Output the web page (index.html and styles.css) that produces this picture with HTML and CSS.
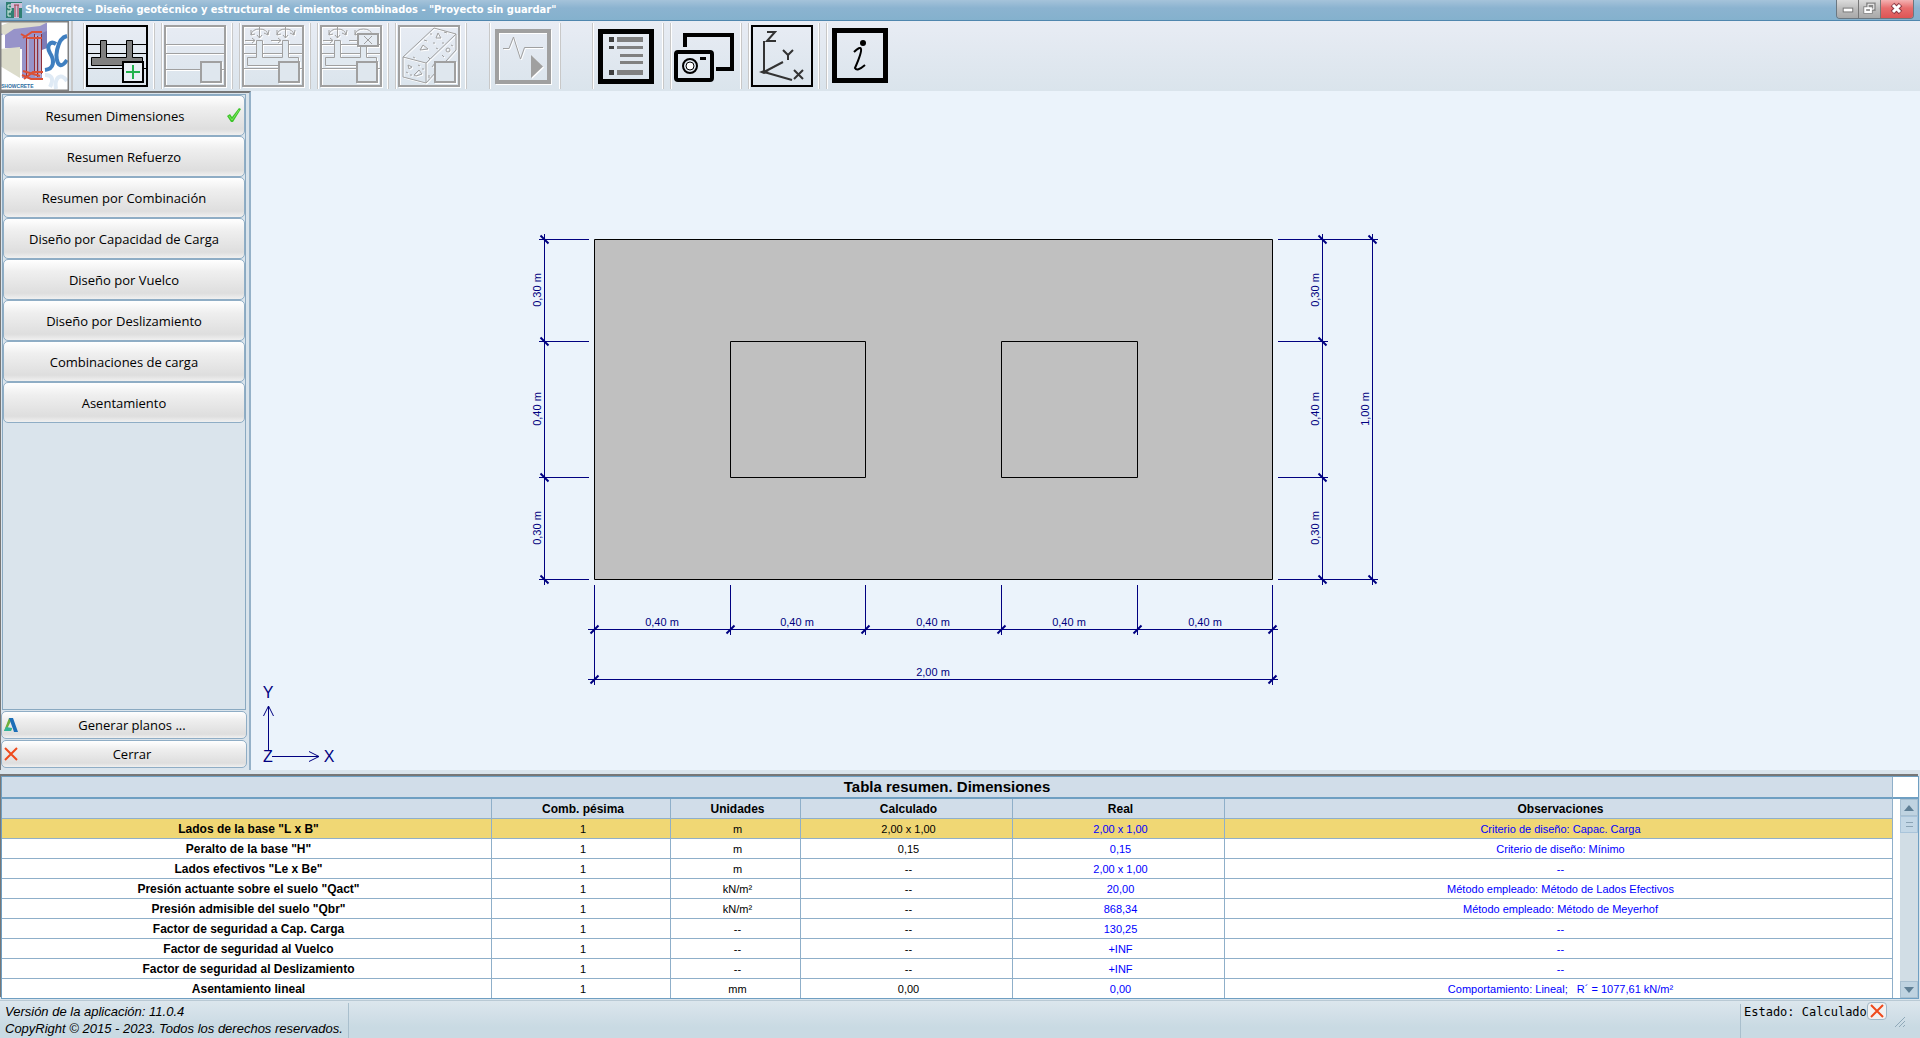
FILE: index.html
```html
<!DOCTYPE html>
<html lang="es">
<head>
<meta charset="utf-8">
<title>Showcrete</title>
<link rel="stylesheet" href="styles.css">
</head>
<body>
<header class="titlebar">
  <svg class="app-icon" viewBox="0 0 16 16" aria-hidden="true">
    <rect width="16" height="16" fill="#2f7f73"/>
    <path d="M5 1h11v5h-3v10H8V6H5z" fill="#cdbfd8"/>
    <path d="M9 3v12M12 3v12M8 3h5" stroke="#a33a4a" fill="none"/>
    <path d="M5 3H2v3h3v3H1M5 10H2v4h3" stroke="#d8efe6" fill="none"/>
  </svg>
  <h1 class="title">Showcrete - Diseño geotécnico y estructural de cimientos combinados - "Proyecto sin guardar"</h1>
  <div class="window-buttons">
    <button class="win" aria-label="Minimizar"><svg viewBox="0 0 22 18"><rect x="6.500" y="8.500" width="10" height="4" fill="#fff" stroke="#777"/></svg></button>
    <button class="win" aria-label="Restaurar"><svg viewBox="0 0 22 18"><g fill="none"><path d="M9.500 4.500h6v5h-6zM6.500 8.500h6v4h-6z" stroke="#888" stroke-width="4"/><path d="M9.500 4.500h6v5h-6z" stroke="#fff"/><path d="M6.500 8.500h6v4h-6z" fill="#999" stroke="#fff" stroke-width="2"/></g></svg></button>
    <button class="win win-close" aria-label="Cerrar ventana"><svg viewBox="0 0 32 18"><path d="M11.500 4.500l8 8M19.500 4.500l-8 8" stroke="#8c3a44" stroke-width="5"/><path d="M12 5l7 7M19 5l-7 7" stroke="#fff" stroke-width="3"/></svg></button>
  </div>
</header>

<nav class="toolbar" aria-label="Herramientas">
  <svg class="logo" viewBox="0 0 69 70" role="img" aria-label="Showcrete">
    <rect width="69" height="70" fill="#fff"/>
    <path d="M0 5L12 2H47V27L42 28V58L22 57V28L5 27V12L0 15z" fill="#9793c9"/>
    <path d="M0 5L10 1H48L40 5L14 8L5 14L0 12z" fill="#dddccd"/>
    <path d="M0 28L20 26V57L0 45z" fill="#dcdccb"/>
    <path d="M42 12L47 10V27L42 29z" fill="#7f7cb6"/>
    <path d="M26.500 15V56M34.500 13V52M41.500 13V53" stroke="#8f2f3a" fill="none"/>
    <path d="M28 15V56M36 14V56M40 15V56" stroke="#e8c6c8" fill="none"/>
    <path d="M37.500 15V56" stroke="#8f2f3a" fill="none"/>
    <path d="M21 13L28 17H42M23 17L32 11H42M22 54L31 58H43M24 58L33 51H43M23 50L40 55" stroke="#dc5035" stroke-width="2" fill="none"/>
    <g fill="none" stroke="#3f7fc0" stroke-width="4"><path d="M56 23C50 19 46 25 50 32C55 40 54 48 45 49"/><path d="M67 15C57 17 53 40 60 44Q63 45 67 39"/></g>
    <g fill="none" stroke="#dfeaf5" stroke-width="4"><path d="M45 54Q56 54 50 66"/><path d="M67 60C60 50 54 58 56 68"/></g>
    <text x="1" y="67" class="logo-text">SHOWCRETE</text>
    <rect x="0" y="0" width="69" height="70" fill="none" stroke="#808080" stroke-width="3"/>
  </svg>

  <div class="tools tools-model">
    <button class="tool" aria-label="Nuevo cimiento"><svg viewBox="0 0 62 62">
      <path d="M0 19.500H62M0 28.500H62M0 43.500H62" stroke="#000"/>
      <path d="M5.500 32.500H14.500V15.500H20.500V32.500H40.500V15.500H46.500V32.500H56.500V40.500H5.500z" fill="#808080" stroke="#000"/>
      <rect x="37" y="37" width="20" height="20" fill="#e9eff5" stroke="#000" stroke-width="2"/>
      <path d="M47 40V54M40 47H54" stroke="#22b14c" stroke-width="2"/>
      <rect x="1" y="1" width="60" height="60" fill="none" stroke="#000" stroke-width="2"/></svg></button>
    <button class="tool" disabled aria-label="Estratos"><svg viewBox="0 0 62 62">
      <path d="M0 19.500H62M0 28.500H62M0 44.500H62" stroke="#a0a0a0"/>
      <rect x="37" y="37" width="20" height="20" fill="#dfe7ee" stroke="#a0a0a0" stroke-width="2"/>
      <rect x="1" y="1" width="60" height="60" fill="none" stroke="#a0a0a0" stroke-width="2"/></svg></button>
    <button class="tool" disabled aria-label="Cargas"><svg viewBox="0 0 62 62">
      <path d="M0 19.500H62M0 28.500H62M0 43.500H62" stroke="#a0a0a0"/>
      <path d="M5.500 32.500H14.500V15.500H20.500V32.500H40.500V15.500H46.500V32.500H56.500V40.500H5.500z" fill="#e1e9f0" stroke="#a0a0a0"/>
      <path d="M9 10Q10 4 17.500 4T26 10M22 8l4 2 1-5M9 5v5l4-1M17.500 1V13M15 10l2.500 3 2.500-3M3 15.500H13M10 13l3 2.500-3 2.500M35 10Q36 4 43.500 4T52 10M48 8l4 2 1-5M35 5v5l4-1M43.500 1V13M41 10l2.500 3 2.500-3M29 15.500H39M36 13l3 2.500-3 2.500" fill="none" stroke="#a0a0a0"/>
      <rect x="37" y="37" width="20" height="20" fill="#dfe7ee" stroke="#a0a0a0" stroke-width="2"/>
      <rect x="1" y="1" width="60" height="60" fill="none" stroke="#a0a0a0" stroke-width="2"/></svg></button>
    <button class="tool" disabled aria-label="Eliminar cargas"><svg viewBox="0 0 62 62">
      <path d="M0 19.500H62M0 28.500H62M0 43.500H62" stroke="#a0a0a0"/>
      <path d="M5.500 32.500H14.500V15.500H20.500V32.500H40.500V15.500H46.500V32.500H56.500V40.500H5.500z" fill="#e1e9f0" stroke="#a0a0a0"/>
      <path d="M9 10Q10 4 17.500 4T26 10M22 8l4 2 1-5M9 5v5l4-1M17.500 1V13M15 10l2.500 3 2.500-3M3 15.500H13M10 13l3 2.500-3 2.500M35 10Q36 4 43.500 4T52 10M35 5v5l4-1M29 15.500H39" fill="none" stroke="#a0a0a0"/>
      <rect x="38" y="9" width="20" height="12" fill="#e5ebf2" stroke="#a0a0a0" stroke-width="2"/><path d="M44 11l8 8M52 11l-8 8" stroke="#a0a0a0"/>
      <rect x="37" y="37" width="20" height="20" fill="#dfe7ee" stroke="#a0a0a0" stroke-width="2"/>
      <rect x="1" y="1" width="60" height="60" fill="none" stroke="#a0a0a0" stroke-width="2"/></svg></button>
    <button class="tool" disabled aria-label="Materiales"><svg viewBox="0 0 62 62">
      <path d="M5 32L36 3L58 9V25L28 58L5 52zM5 32L28 38L58 9M28 38V58" fill="none" stroke="#a0a0a0"/>
      <path d="M22 25l3-5 5 4zM38 13l2-5 3 5zM16 50l5-5 3 4-6 2zM10 40l4 2-3 2zM30 32l2 2M38 23l2 1M26 15l3 1M46 7l3 1M34 42l3-4 1 4M44 30l2 2M20 40l2 1M8 47l2 1M13 49v2M25 43v2M53 20l2 1M15 32l2 1M31 50v3M35 18h2M44 18h2M32 9h2" fill="none" stroke="#a0a0a0"/>
      <circle cx="50" cy="25" r="2" fill="none" stroke="#a0a0a0"/>
      <rect x="37" y="37" width="20" height="20" fill="#dfe7ee" stroke="#a0a0a0" stroke-width="2"/>
      <rect x="1" y="1" width="60" height="60" fill="none" stroke="#a0a0a0" stroke-width="2"/></svg></button>
  </div>

  <div class="tools tools-run">
    <button class="tool" disabled aria-label="Calcular"><svg viewBox="0 0 62 62">
      <path d="M11 23.500H17L21.500 12L28.500 34L32.500 22.500H51" fill="none" stroke="#a0a0a0"/>
      <path d="M39 30L51 41.500L39 53z" fill="#a0a0a0"/>
      <rect x="5" y="6" width="52" height="51" fill="none" stroke="#a0a0a0" stroke-width="4"/></svg></button>
  </div>

  <div class="tools tools-view">
    <button class="tool" aria-label="Resultados"><svg viewBox="0 0 62 62">
      <rect x="5.500" y="6.500" width="51" height="50" fill="none" stroke="#000" stroke-width="5"/>
      <path d="M14 12h5v5h-5zM14 21h5v3h-5zM14 45h5v5h-5z" fill="#404040"/>
      <path d="M22 12h26v5H22zM22 21h26v3H22zM25 29h23v3H25zM25 36h23v3H25zM22 45h26v5H22z" fill="#808080"/></svg></button>
    <button class="tool" aria-label="Capturar"><svg viewBox="0 0 62 62">
      <path d="M12 22V10H59V44H43" fill="none" stroke="#000" stroke-width="4"/>
      <rect x="3" y="27" width="36" height="28" rx="2" fill="none" stroke="#000" stroke-width="4"/>
      <path d="M27 32h6v3h-6z"/><circle cx="17" cy="41" r="7" fill="none" stroke="#000" stroke-width="2"/><circle cx="17" cy="41" r="4" fill="#fff" stroke="#000"/></svg></button>
    <button class="tool" aria-label="Ejes"><svg viewBox="0 0 62 62">
      <rect x="1" y="1" width="60" height="60" fill="none" stroke="#000" stroke-width="2"/>
      <path d="M13 47V16M13 47L32 37M13 47L41 55" fill="none" stroke="#333" stroke-width="2"/>
      <path d="M8 47l5-2 5 2-5 2z" fill="#333"/>
      <path d="M16 7H24L16 16H25M32 25l5 5 5-5M37 30v5M43 45l9 9M52 45l-9 9" fill="none" stroke="#333" stroke-width="2"/></svg></button>
    <button class="tool tool-last" aria-label="Información"><svg viewBox="0 0 62 62">
      <rect x="5.500" y="5.500" width="51" height="50" fill="none" stroke="#000" stroke-width="5"/>
      <circle cx="34" cy="18" r="3"/><path d="M25 27Q31 21 32 24T26 43Q28 47 36 40" fill="none" stroke="#000" stroke-width="2"/></svg></button>
  </div>
</nav>

<main class="workspace">
  <aside class="sidebar">
    <div class="menu">
      <button class="item item-done">Resumen Dimensiones<svg class="check" viewBox="0 0 14 14" aria-hidden="true"><path d="M0 8L3 6L5 9L12 0L14 1L6 14H4z" fill="#3fc52c"/><path d="M2 8l3 4L12 2" stroke="#7ee65c" fill="none"/></svg></button>
      <button class="item">Resumen Refuerzo</button>
      <button class="item">Resumen por Combinación</button>
      <button class="item">Diseño por Capacidad de Carga</button>
      <button class="item">Diseño por Vuelco</button>
      <button class="item">Diseño por Deslizamiento</button>
      <button class="item">Combinaciones de carga</button>
      <button class="item">Asentamiento</button>
    </div>
    <button class="action"><svg viewBox="0 0 14 14" aria-hidden="true"><path d="M0 13L5 0H8L6 5L3 11L8 10L7 13z" fill="#6fae3a"/><path d="M0 13L2 9L8 10L7 13z" fill="#2fb49a"/><path d="M5 0H9L14 14H10L9 11z" fill="#1c6fb8"/></svg><span>Generar planos ...</span></button>
    <button class="action"><svg viewBox="0 0 14 14" aria-hidden="true"><path d="M1 1L13 13M13 1L1 13" stroke="#ef4a1c" stroke-width="2"/></svg><span>Cerrar</span></button>
  </aside>

  <section class="canvas" aria-label="Planta del cimiento">
    <svg class="drawing" viewBox="251 91 1669 679" preserveAspectRatio="xMinYMin meet">
      <g fill="#c0c0c0" stroke="#000">
        <path d="M594.500 239.500H1272.500V579.500H594.500z"/>
        <path d="M730.500 341.500H865.500V477.500H730.500zM1001.500 341.500H1137.500V477.500H1001.500z"/>
      </g>
      <path class="dim" d="M539 239.500H589M539 341.500H589M539 477.500H589M539 579.500H589M544.500 234V585
        M1278 239.500H1378M1278 341.500H1328M1278 477.500H1328M1278 579.500H1378M1322.500 234V585M1372.500 234V585
        M594.500 585V685M1272.500 585V685M730.500 585V635M865.500 585V635M1001.500 585V635M1137.500 585V635M588 629.500H1278M588 679.500H1278"/>
      <path class="tick" d="M540.500 235.500l8 8M540.500 337.500l8 8M540.500 473.500l8 8M540.500 575.500l8 8
        M1318.500 235.500l8 8M1318.500 337.500l8 8M1318.500 473.500l8 8M1318.500 575.500l8 8M1368.500 235.500l8 8M1368.500 575.500l8 8
        M590.500 633.500l8-8M726.500 633.500l8-8M861.500 633.500l8-8M997.500 633.500l8-8M1133.500 633.500l8-8M1268.500 633.500l8-8M590.500 683.500l8-8M1268.500 683.500l8-8"/>
      <g class="dim-text">
        <text x="662" y="626">0,40 m</text><text x="797" y="626">0,40 m</text><text x="933" y="626">0,40 m</text><text x="1069" y="626">0,40 m</text><text x="1205" y="626">0,40 m</text>
        <text x="933" y="676">2,00 m</text>
        <text transform="translate(541 290) rotate(-90)">0,30 m</text><text transform="translate(541 409) rotate(-90)">0,40 m</text><text transform="translate(541 528) rotate(-90)">0,30 m</text>
        <text transform="translate(1319 290) rotate(-90)">0,30 m</text><text transform="translate(1319 409) rotate(-90)">0,40 m</text><text transform="translate(1319 528) rotate(-90)">0,30 m</text>
        <text transform="translate(1369 409) rotate(-90)">1,00 m</text>
      </g>
      <path class="dim" d="M268.500 750V706M263.500 716L268.500 706L273.500 716M272 756.500H319M309 751.500L319 756.500L309 761.500"/>
      <g class="axis-text"><text x="268" y="698">Y</text><text x="268" y="762">Z</text><text x="329" y="762">X</text></g>
    </svg>
  </section>
</main>

<section class="results">
  <div class="results-body">
    <table class="grid">
      <caption>Tabla resumen. Dimensiones</caption>
      <colgroup><col class="c-name"><col class="c-comb"><col class="c-unit"><col class="c-value"><col class="c-value"><col></colgroup>
      <thead><tr><th></th><th>Comb. pésima</th><th>Unidades</th><th>Calculado</th><th>Real</th><th>Observaciones</th></tr></thead>
      <tbody>
        <tr class="selected"><th>Lados de la base "L x B"</th><td>1</td><td>m</td><td>2,00 x 1,00</td><td>2,00 x 1,00</td><td>Criterio de diseño: Capac. Carga</td></tr>
        <tr><th>Peralto de la base "H"</th><td>1</td><td>m</td><td>0,15</td><td>0,15</td><td>Criterio de diseño: Mínimo</td></tr>
        <tr><th>Lados efectivos "Le x Be"</th><td>1</td><td>m</td><td>--</td><td>2,00 x 1,00</td><td>--</td></tr>
        <tr><th>Presión actuante sobre el suelo "Qact"</th><td>1</td><td>kN/m²</td><td>--</td><td>20,00</td><td>Método empleado: Método de Lados Efectivos</td></tr>
        <tr><th>Presión admisible del suelo "Qbr"</th><td>1</td><td>kN/m²</td><td>--</td><td>868,34</td><td>Método empleado: Método de Meyerhof</td></tr>
        <tr><th>Factor de seguridad a Cap. Carga</th><td>1</td><td>--</td><td>--</td><td>130,25</td><td>--</td></tr>
        <tr><th>Factor de seguridad al Vuelco</th><td>1</td><td>--</td><td>--</td><td>+INF</td><td>--</td></tr>
        <tr><th>Factor de seguridad al Deslizamiento</th><td>1</td><td>--</td><td>--</td><td>+INF</td><td>--</td></tr>
        <tr><th>Asentamiento lineal</th><td>1</td><td>mm</td><td>0,00</td><td>0,00</td><td>Comportamiento: Lineal; &nbsp; R´ = 1077,61 kN/m²</td></tr>
      </tbody>
    </table>
    <div class="scroll">
      <button class="scroll-end" aria-label="Subir"><svg viewBox="0 0 10 6"><path d="M0 6L5 0L10 6z" fill="#5f7f95"/></svg></button>
      <div class="thumb"></div>
      <div class="track"></div>
      <button class="scroll-end" aria-label="Bajar"><svg viewBox="0 0 10 6"><path d="M0 0L5 6L10 0z" fill="#5f7f95"/></svg></button>
    </div>
  </div>
</section>

<footer class="status">
  <p class="version">Versión de la aplicación: 11.0.4<br>CopyRight © 2015 - 2023. Todos los derechos reservados.</p>
  <div class="state"><span>Estado: Calculado</span>
    <button class="state-close" aria-label="Cancelar"><svg viewBox="0 0 14 14"><path d="M1 1L13 13M13 1L1 13" stroke="#ef4a1c" stroke-width="2"/></svg></button>
    <svg class="grip" viewBox="0 0 10 10" aria-hidden="true"><path d="M0 10L10 0M4 10L10 4M8 10L10 8" stroke="#8fa9b9"/></svg>
  </div>
</footer>
</body>
</html>
```
FILE: styles.css
```css
* { box-sizing: border-box; }
body {
  margin: 0;
  min-height: 100vh;
  display: flex;
  flex-direction: column;
  background: #dae4ec;
  color: #000;
  font: 12px/18px "Liberation Sans", sans-serif;
}
button { font: inherit; color: inherit; margin: 0; padding: 0; border: 0; background: none; }
svg { display: block; }

.titlebar {
  display: flex;
  height: 21px;
  padding: 0 6px;
  background: linear-gradient(#a5c3da, #8bb3d0 8px, #84b1cd);
  border-bottom: 1px solid #4f86ae;
}
.app-icon { width: 16px; height: 16px; margin-top: 2px; }
.title {
  flex: 1;
  margin: 0 0 0 3px;
  font: bold 11px/20px "DejaVu Sans Condensed", "DejaVu Sans", sans-serif;
  color: #fff;
}
.window-buttons {
  display: flex;
  height: 19px;
  border: 1px solid #6b7780;
  border-top: 0;
  border-radius: 0 0 4px 4px;
  overflow: hidden;
}
.win { width: 22px; background: linear-gradient(#dcdcdc, #bcbcbc 50%, #a9a9a9); border-right: 1px solid #777; }
.win-close { width: 32px; border: 0; background: linear-gradient(#f3b2b2, #e76d6d 45%, #dd5555); }

.toolbar {
  display: flex;
  height: 70px;
  background: linear-gradient(#e8ecf4, #dae4ec);
}
.logo { width: 69px; height: 70px; }
.logo-text { font: bold 5px "Liberation Sans", sans-serif; fill: #2d6f9f; }
.tools { display: flex; gap: 6px; padding: 2px 0; }
.tools-model { margin-left: 2px; padding-left: 10px; border-left: 2px solid; border-image: linear-gradient(90deg, #c8c8c8 50%, #fff 50%) 2; }
.tools-run { margin-left: 22px; }
.tools-view { margin-left: 31px; }
.tool {
  width: 72px;
  padding: 0 5px 0 1px;
  border: 0 solid;
  border-width: 0 2px;
  border-image: linear-gradient(90deg, #c8c8c8 1px, #fff 1px 71px, #c8c8c8 71px) 0 2;
}
.tool-last { border-image: linear-gradient(90deg, #c8c8c8 1px, #fff 1px 2px, transparent 2px) 0 2; }
.tool svg { width: 62px; height: 62px; }
.tool:disabled svg { filter: drop-shadow(1px 1px 0 #fff); }

.workspace { flex: 1; display: flex; min-height: 400px; }
.sidebar {
  display: flex;
  flex-direction: column;
  gap: 1px;
  width: 251px;
  padding: 1px 2px 2px 0;
  background: #dae4ec;
  border-top: 2px solid #777;
  border-left: 1px solid #777;
  border-right: 2px solid #95b1c8;
}
.menu { flex: 1; margin: 0 1px; border: 1px solid #8aa9c1; }
.item, .action {
  position: relative;
  display: block;
  width: 100%;
  border: 1px solid #8fadc5;
  border-radius: 5px;
  background: linear-gradient(#fff, #efefef 30%, #dedede 85%, #f0f0f0);
  font: 500 13px/18px "Open Sans", "Noto Sans", sans-serif;
}
.item { height: 41px; }
.item-done { padding-right: 18px; }
.check { position: absolute; right: 3px; top: 12px; width: 14px; height: 14px; }
.action { display: flex; align-items: center; height: 28px; padding-left: 2px; }
.action svg { width: 14px; height: 14px; }
.action span { flex: 1; }
.canvas { flex: 1; background: #ebf3fb; overflow: hidden; }
.drawing { width: 100%; }
.dim { fill: none; stroke: #000080; }
.tick { fill: none; stroke: #000080; stroke-width: 2; }
.dim-text { font: 11px "Liberation Sans", sans-serif; fill: #000080; text-anchor: middle; }
.axis-text { font: 16px "Liberation Sans", sans-serif; fill: #000080; text-anchor: middle; }

.results { padding: 6px 1px 1px; border-bottom: 1px solid #b9c9d4; background: #dae4ec; }
.results-body {
  display: flex;
  border: 1px solid #6f9fc2;
  background: #fff;
  box-shadow: -1px -2px 0 #777;
}
.grid { flex: 1; width: 100%; table-layout: fixed; border-collapse: separate; border-spacing: 0; text-align: center; }
.grid caption {
  height: 22px;
  background: #d1dde9;
  border-bottom: 2px solid #6f9fc2;
  border-right: 1px solid #8fafc9;
  font: bold 15px/20px "Liberation Sans", sans-serif;
}
.grid th, .grid td { height: 20px; padding: 0 0 0 4px; border: solid #8fafc9; border-width: 0 1px 1px 0; white-space: nowrap; }
.grid td { font-size: 11px; }
.grid thead th { background: #d1dde9; }
.grid tbody tr:last-child > * { height: 19px; border-bottom: 0; }
.grid .selected > * { background: #f0d774; }
.grid td:nth-child(n+5) { color: #0000ff; }
.c-name { width: 490px; }
.c-comb { width: 179px; }
.c-unit { width: 130px; }
.c-value { width: 212px; }
.scroll { display: flex; flex-direction: column; width: 25px; padding: 22px 0 0 7px; background: linear-gradient(#6f9fc2, #6f9fc2) 0 20px / 100% 2px no-repeat; }
.scroll-end, .thumb { height: 17px; border: 1px solid #a9c0d1; background: #bfd3e1; }
.scroll-end svg { width: 10px; height: 6px; margin: auto; }
.thumb { border-color: #a9c4da; background: linear-gradient(#8aa3b5, #8aa3b5) 50% 5px / 7px 1px no-repeat, linear-gradient(#8aa3b5, #8aa3b5) 50% 9px / 7px 1px no-repeat, #c3d7e6; }
.track { flex: 1; background: #d1dde5; }

.status {
  display: flex;
  justify-content: space-between;
  height: 37px;
  background: linear-gradient(#dce6ed, #c9dae3 70%);
}
.version {
  width: 349px;
  margin: 2px 0 0;
  padding-left: 5px;
  border-right: 1px solid #a9bfcd;
  font: italic 13px/17px "Liberation Sans", sans-serif;
}
.state {
  display: flex;
  width: 180px;
  margin-top: 3px;
  padding-left: 3px;
  border-left: 1px solid #a9bfcd;
  font: 12px/17px "DejaVu Sans Mono", monospace;
}
.state-close { width: 20px; height: 18px; padding: 1px 2px; border: 1px solid #9fb8c8; border-radius: 4px; background: #f1f1f1; margin-top: -2px; }
.grip { width: 10px; height: 10px; margin: 13px 0 0 8px; }
```
